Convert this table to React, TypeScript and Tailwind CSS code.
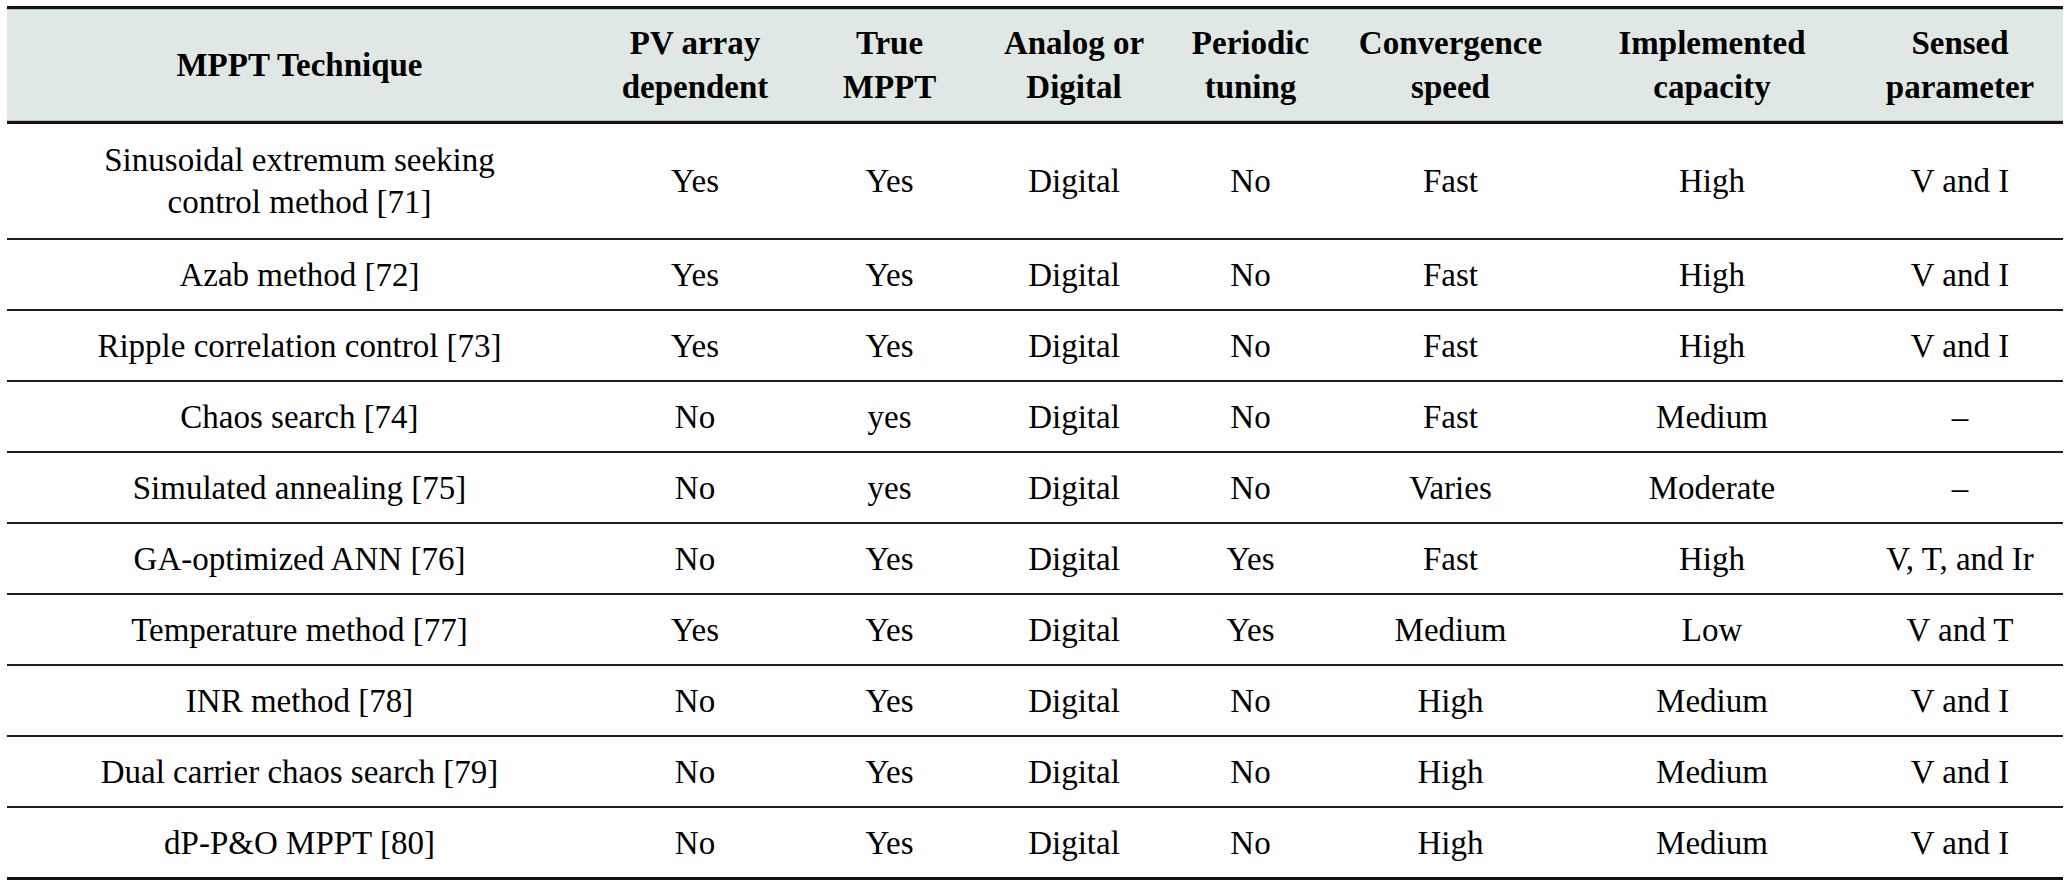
const cols = 'grid grid-cols-[585px_206px_183px_186px_167px_233px_290px_206px]'

const headers: string[][] = [
  ['MPPT Technique'],
  ['PV array', 'dependent'],
  ['True', 'MPPT'],
  ['Analog or', 'Digital'],
  ['Periodic', 'tuning'],
  ['Convergence', 'speed'],
  ['Implemented', 'capacity'],
  ['Sensed', 'parameter'],
]

const rows: string[][] = [
  ['Sinusoidal extremum seeking\ncontrol method [71]', 'Yes', 'Yes', 'Digital', 'No', 'Fast', 'High', 'V and I'],
  ['Azab method [72]', 'Yes', 'Yes', 'Digital', 'No', 'Fast', 'High', 'V and I'],
  ['Ripple correlation control [73]', 'Yes', 'Yes', 'Digital', 'No', 'Fast', 'High', 'V and I'],
  ['Chaos search [74]', 'No', 'yes', 'Digital', 'No', 'Fast', 'Medium', '–'],
  ['Simulated annealing [75]', 'No', 'yes', 'Digital', 'No', 'Varies', 'Moderate', '–'],
  ['GA-optimized ANN [76]', 'No', 'Yes', 'Digital', 'Yes', 'Fast', 'High', 'V, T, and Ir'],
  ['Temperature method [77]', 'Yes', 'Yes', 'Digital', 'Yes', 'Medium', 'Low', 'V and T'],
  ['INR method [78]', 'No', 'Yes', 'Digital', 'No', 'High', 'Medium', 'V and I'],
  ['Dual carrier chaos search [79]', 'No', 'Yes', 'Digital', 'No', 'High', 'Medium', 'V and I'],
  ['dP-P&O MPPT [80]', 'No', 'Yes', 'Digital', 'No', 'High', 'Medium', 'V and I'],
]

export default function App() {
  return (
    <div className="w-[2071px] h-[889px] bg-white pt-[6px] pl-[7px] font-[family-name:Liberation_Serif,Times_New_Roman,serif] text-[33px] text-black">
      <div className="w-[2056px]">
        {/* header */}
        <div className="border-t-[3px] border-b-[3px] border-[#151515]">
          <div className={`${cols} h-[112px] bg-[#e0e8e5] border-y border-[#b8bfbc] font-bold leading-[44px]`}>
            {headers.map((h, i) => (
              <div key={i} className="flex flex-col items-center justify-center text-center whitespace-nowrap">
                {h.map((line) => (
                  <span key={line}>{line}</span>
                ))}
              </div>
            ))}
          </div>
        </div>

        {/* body */}
        {rows.map((r, ri) => (
          <div
            key={ri}
            className={`${cols} leading-[42px] ${
              ri === 0 ? 'h-[116px]' : ri === rows.length - 1 ? 'h-[72px]' : 'h-[71px]'
            } ${ri === rows.length - 1 ? 'border-b-[3px] border-[#111]' : 'border-b-2 border-[#1e1e1e]'}`}
          >
            {r.map((cell, ci) => (
              <div key={ci} className="flex flex-col items-center justify-center text-center whitespace-nowrap">
                {cell.split('\n').map((line) => (
                  <span key={line}>{line}</span>
                ))}
              </div>
            ))}
          </div>
        ))}
      </div>
    </div>
  )
}
